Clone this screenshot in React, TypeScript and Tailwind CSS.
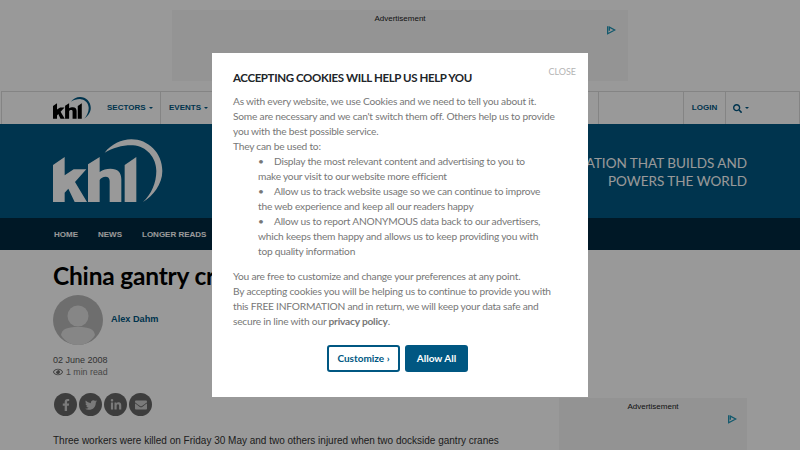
import { FaEnvelope, FaFacebookF, FaLinkedinIn, FaRegEye, FaSearch, FaTwitter } from "react-icons/fa";

const sans = "font-['Liberation_Sans',Arial,sans-serif]";
const modalFont = "font-['Lato','Noto_Sans',sans-serif]";

function KhlLogo({ className, dark }: { className: string; dark?: boolean }) {
  const letters = dark ? "#000000" : "#ffffff";
  const arc = dark ? "#005782" : "#ffffff";
  return (
    <svg viewBox="0 0 330 190" className={className}>
      <path fill={letters} d="M0 77 L35 53 V108 L62 90 H100 L66 128 L102 188 H65 L46 148 L35 160 V188 H0 Z" />
      <path
        fill={letters}
        d="M105 75 L140 53 V98 C150 90 160 88 172 88 C195 88 205 100 205 120 V188 H170 V125 C170 116 165 112 158 112 C150 112 143 116 140 122 V188 H105 Z"
      />
      <path fill={letters} d="M215 77 L250 53 V188 H215 Z" />
      <path
        fill={arc}
        d="M155 40 C175 15 205 0 235 0 C285 0 328 40 328 95 C328 135 300 170 270 188 C295 165 310 130 310 95 C310 55 280 20 240 18 C210 17 180 25 155 40 Z"
      />
    </svg>
  );
}

function AdChoices() {
  return (
    <svg viewBox="0 0 12 12" className="h-[10px] w-[10px]" fill="none" stroke="#1c93b5" strokeWidth="1.5">
      <path d="M2 1.5 V10.5 L10.5 6 L4 2.5 V7" />
    </svg>
  );
}

function NavLabel({ label, caret }: { label: string; caret?: boolean }) {
  return (
    <div className="flex items-center gap-[3px] text-[8px] font-bold text-[#005782]">
      <span>{label}</span>
      {caret && <span className="h-0 w-0 border-x-[2px] border-t-[2px] border-x-transparent border-t-[#005782]" />}
    </div>
  );
}

function ShareButton({ children }: { children: React.ReactNode }) {
  return (
    <div className="flex h-[23px] w-[23px] items-center justify-center rounded-full bg-[#666666] text-[12px] text-[#cccccc]">
      {children}
    </div>
  );
}

function Bullet({ first, rest }: { first: string; rest: string[] }) {
  return (
    <div className="pl-[25px]">
      <div className="flex">
        <span className="w-[16px]">•</span>
        <span>{first}</span>
      </div>
      {rest.map((line) => (
        <div key={line}>{line}</div>
      ))}
    </div>
  );
}

function CookieModal() {
  return (
    <div className={`absolute left-[212px] top-[53px] h-[344px] w-[376px] bg-white px-[21px] ${modalFont}`}>
      <div className="absolute right-[12px] top-[12px] text-[9px] leading-[14px] text-[#b4b4b4]">CLOSE</div>
      <h2 className="whitespace-nowrap pt-[17px] text-[11.5px] font-bold leading-[16px] tracking-[-0.38px] text-[#212529]">
        ACCEPTING COOKIES WILL HELP US HELP YOU
      </h2>
      <div className="mt-[8px] whitespace-nowrap text-[10.2px] leading-[15px] tracking-[-0.22px] text-[#777777]">
        <div>As with every website, we use Cookies and we need to tell you about it.</div>
        <div>Some are necessary and we can't switch them off. Others help us to provide</div>
        <div>you with the best possible service.</div>
        <div>They can be used to:</div>
        <Bullet first="Display the most relevant content and advertising to you to" rest={["make your visit to our website more efficient"]} />
        <Bullet first="Allow us to track website usage so we can continue to improve" rest={["the web experience and keep all our readers happy"]} />
        <Bullet
          first="Allow us to report ANONYMOUS data back to our advertisers,"
          rest={["which keeps them happy and allows us to keep providing you with", "top quality information"]}
        />
        <div className="mt-[10px]">You are free to customize and change your preferences at any point.</div>
        <div>By accepting cookies you will be helping us to continue to provide you with</div>
        <div>this FREE INFORMATION and in return, we will keep your data safe and</div>
        <div>
          secure in line with our <b>privacy policy</b>.
        </div>
      </div>
      <div className="ml-[94px] mt-[16px] flex gap-[5px]">
        <button className="flex h-[27px] w-[73px] items-center justify-center rounded-[3px] border-2 border-[#005782] text-[10px] font-bold text-[#005782]">
          Customize ›
        </button>
        <button className="flex h-[27px] w-[63px] items-center justify-center rounded-[3px] bg-[#005782] text-[10px] font-bold text-white">
          Allow All
        </button>
      </div>
    </div>
  );
}

export default function App() {
  return (
    <div className={`relative h-[450px] w-[800px] overflow-hidden bg-white ${sans}`}>
      <div className="pt-[10px]">
        <div className="mx-auto flex h-[71px] w-[456px] flex-col bg-[#f7f7f7]">
          <div className="pt-[4px] text-center text-[8px] leading-[10px] text-[#222222]">Advertisement</div>
          <div className="mr-[12px] mt-[1px] flex justify-end">
            <AdChoices />
          </div>
        </div>
      </div>

      <div className="ml-px mt-[10px] flex h-[33px] border-t border-[#dcdcdc] bg-white">
        <div className="flex w-[160px] items-center border-x border-[#dcdcdc] pl-[51px]">
          <KhlLogo dark className="h-[22px] w-[38px]" />
          <div className="ml-[16px]">
            <NavLabel label="SECTORS" caret />
          </div>
        </div>
        <div className="flex w-[438px] items-center border-r border-[#dcdcdc] pl-[8px]">
          <NavLabel label="EVENTS" caret />
        </div>
        <div className="w-[85px] border-r border-[#dcdcdc]" />
        <div className="flex w-[42px] items-center justify-center border-r border-[#dcdcdc]">
          <NavLabel label="LOGIN" />
        </div>
        <div className="flex flex-1 items-center gap-[3px] border-r border-[#dcdcdc] pl-[7px] text-[9px] text-[#005782]">
          <FaSearch />
          <span className="h-0 w-0 border-x-[2px] border-t-[2px] border-x-transparent border-t-[#005782]" />
        </div>
      </div>

      <div className="flex h-[94px] items-center justify-between bg-[#005782] px-[53px]">
        <KhlLogo className="h-[64px] w-[110px]" />
        <div className={`pt-[2px] text-right text-[13.5px] leading-[18px] text-white ${modalFont}`}>
          <div>INFORMATION THAT BUILDS AND</div>
          <div>POWERS THE WORLD</div>
        </div>
      </div>

      <div className="flex h-[32px] items-center gap-[20px] bg-[#002840] pl-[54px] pt-px text-[8px] font-bold text-white">
        <span>HOME</span>
        <span>NEWS</span>
        <span>LONGER READS</span>
      </div>

      <div className="flex gap-[60px] px-[53px]">
        <div className="w-[446px] shrink-0">
          <h1 className={`whitespace-nowrap pt-[10px] text-[24.5px] font-bold leading-[32px] tracking-[-0.2px] text-black ${modalFont}`}>
            China gantry crane collapse
          </h1>
          <div className="mt-[3px] flex items-center gap-[8px]">
            <div className="h-[50px] w-[50px] rounded-full bg-[#b8b8b8]">
              <svg viewBox="0 0 50 50" className="h-[50px] w-[50px]">
                <circle cx="25" cy="21" r="10.5" fill="#e0e0e0" />
                <path d="M8 40 C9 34 14 32 25 32 C36 32 41 34 42 40 C38 47 31 50 25 50 C19 50 12 47 8 40 Z" fill="#e0e0e0" />
              </svg>
            </div>
            <span className="text-[9.2px] font-bold text-[#005782]">Alex Dahm</span>
          </div>
          <div className="mt-[9px] text-[9px] leading-[12px] text-[#555555]">02 June 2008</div>
          <div className="flex items-center gap-[3px] text-[8.8px] leading-[12px] text-[#777777]">
            <FaRegEye className="text-[10px] text-[#666666]" />
            <span>1 min read</span>
          </div>
          <div className="ml-px mt-[15px] flex gap-[2px]">
            <ShareButton>
              <FaFacebookF />
            </ShareButton>
            <ShareButton>
              <FaTwitter />
            </ShareButton>
            <ShareButton>
              <FaLinkedinIn />
            </ShareButton>
            <ShareButton>
              <FaEnvelope />
            </ShareButton>
          </div>
          <p className="mt-[17px] whitespace-nowrap text-[10px] leading-[16px] text-[#333333]">
            Three workers were killed on Friday 30 May and two others injured when two dockside gantry cranes
          </p>
        </div>
        <div className="mt-[148px] flex h-[60px] w-[188px] shrink-0 flex-col bg-[#f5f5f5]">
          <div className="pt-[4px] text-center text-[8px] leading-[10px] text-[#222222]">Advertisement</div>
          <div className="mr-[10px] mt-[2px] flex justify-end">
            <AdChoices />
          </div>
        </div>
      </div>

      <div className="absolute inset-0 bg-black/40" />
      <CookieModal />
    </div>
  );
}
